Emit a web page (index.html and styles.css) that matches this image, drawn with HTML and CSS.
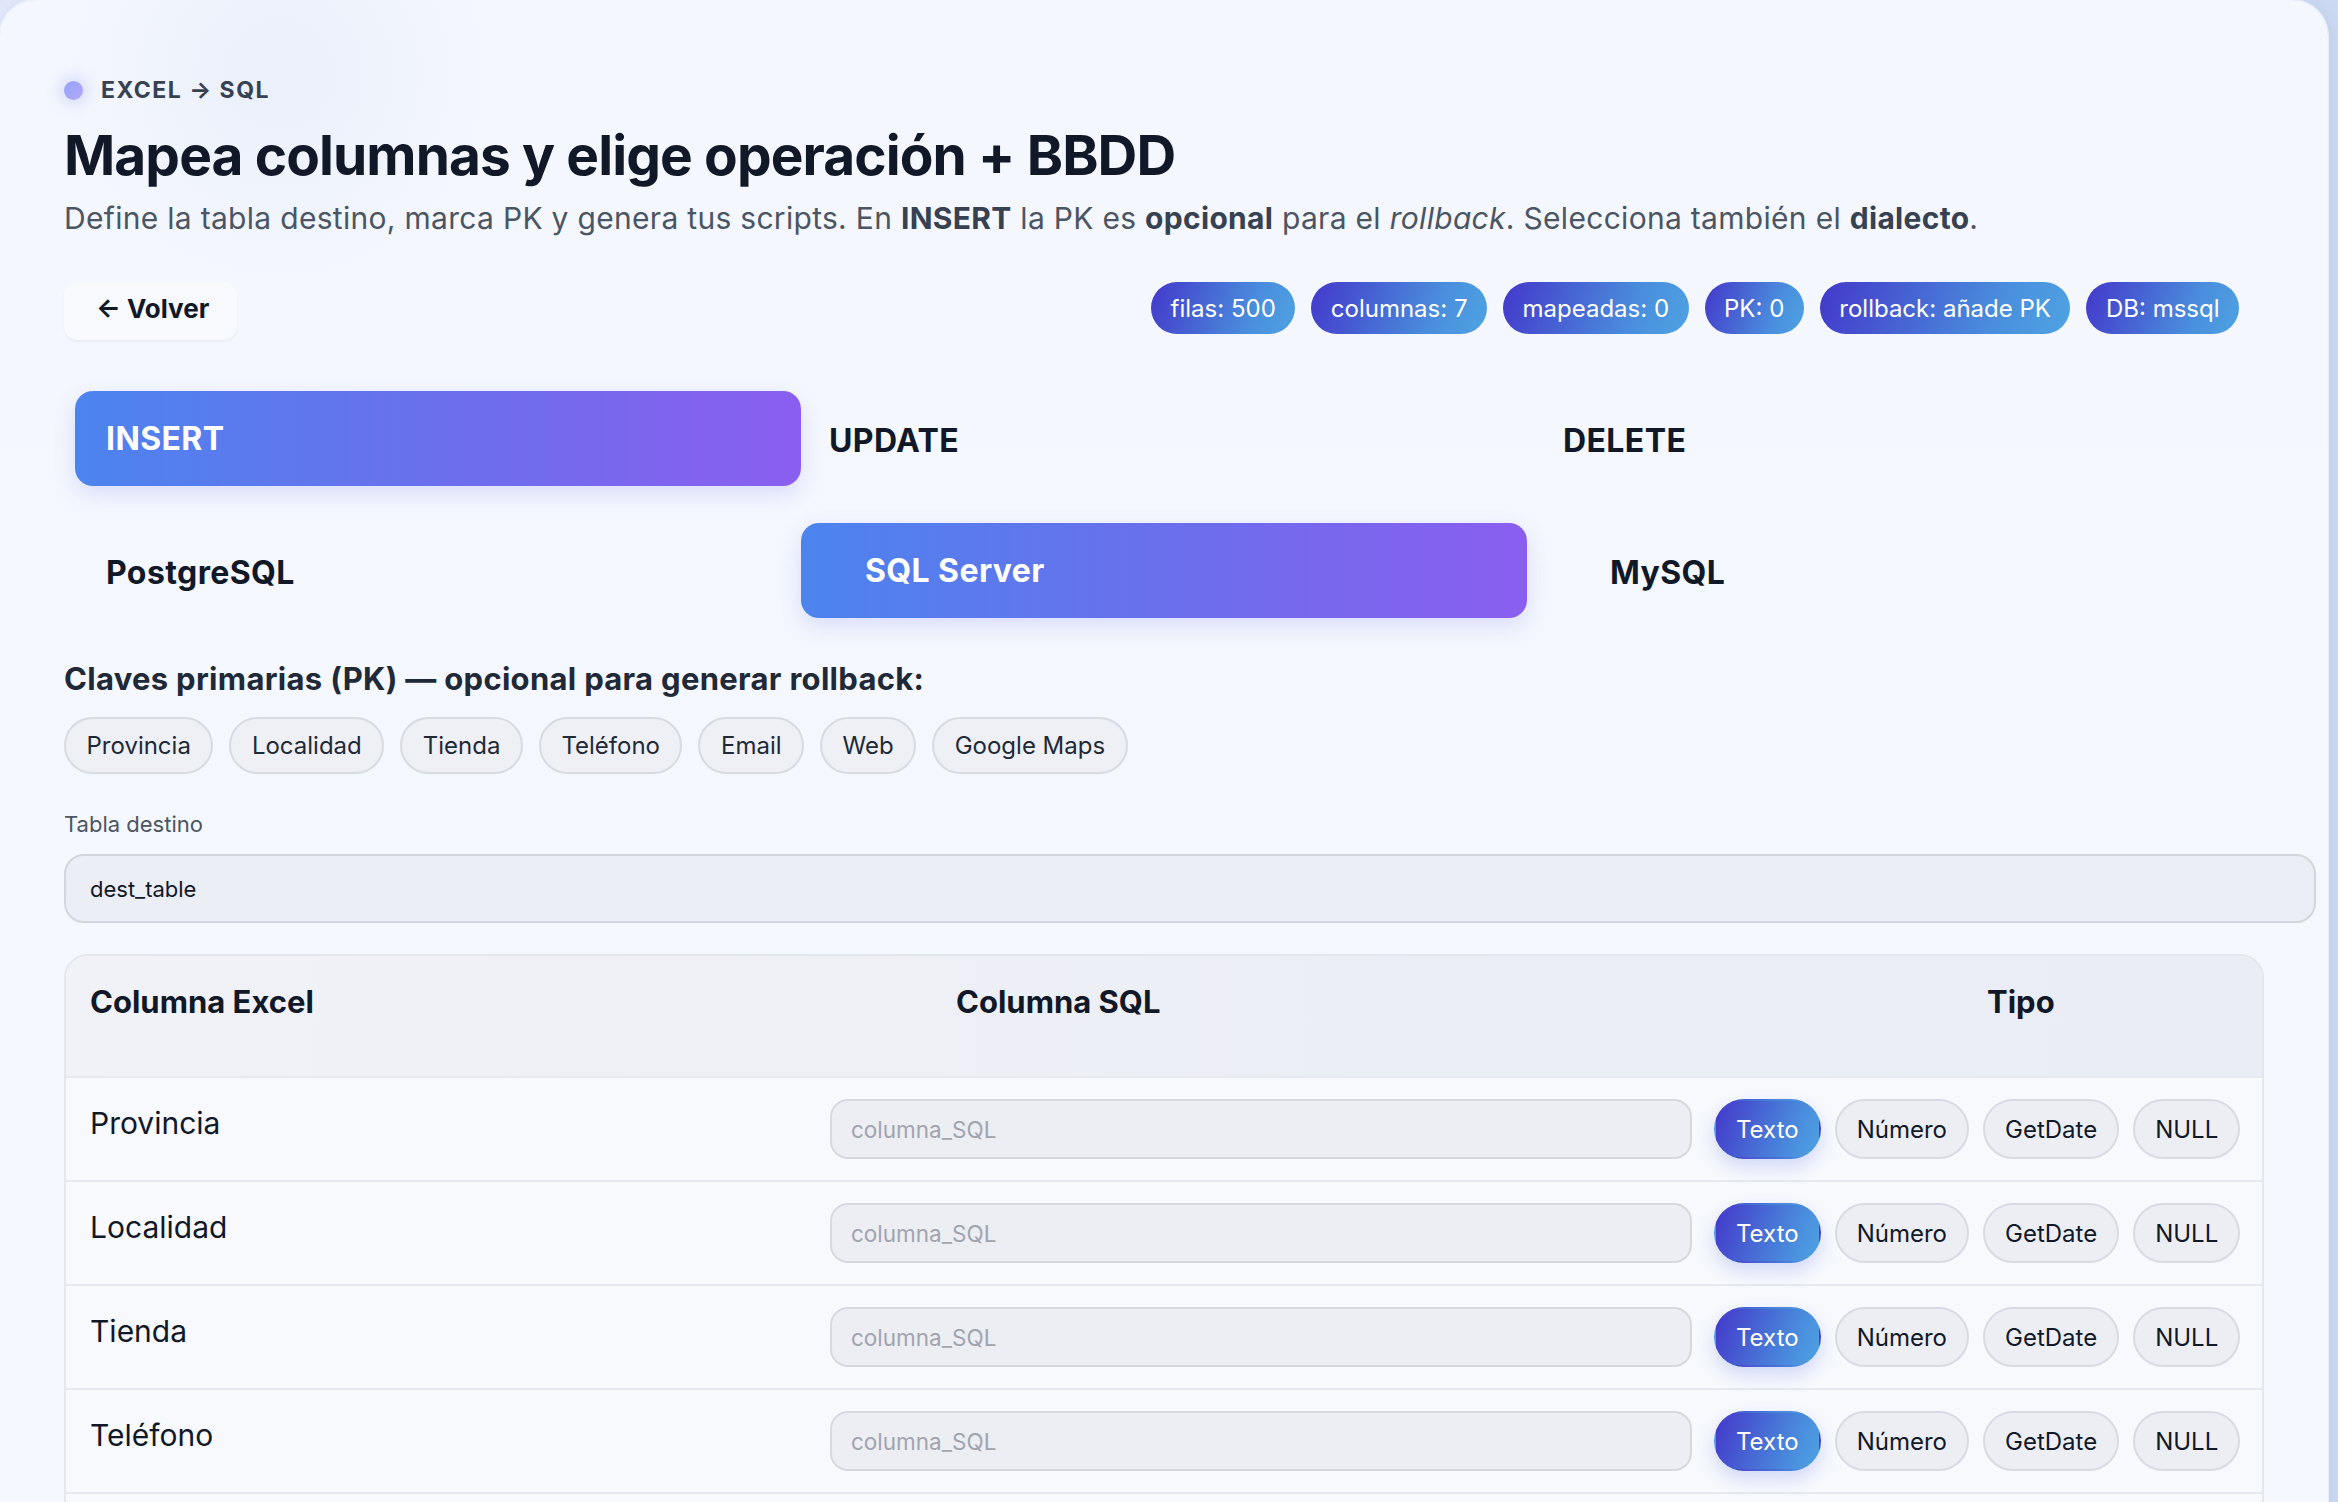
FILE: index.html
```html
<!DOCTYPE html>
<html lang="es">
<head>
<meta charset="utf-8">
<title>Excel → SQL</title>
<link rel="stylesheet" href="styles.css">
</head>
<body>
<main class="card">
  <div class="eyebrow"><span class="dot"></span><span>EXCEL → SQL</span></div>
  <h1 class="title">Mapea columnas y elige operación + BBDD</h1>
  <p class="subtitle">Define la tabla destino, marca PK y genera tus scripts. En <b>INSERT</b> la PK es <b>opcional</b> para el <i>rollback</i>. Selecciona también el <b>dialecto</b>.</p>

  <div class="actions">
    <button class="back">← Volver</button>
    <div class="badges">
      <span class="badge">filas: 500</span>
      <span class="badge">columnas: 7</span>
      <span class="badge">mapeadas: 0</span>
      <span class="badge">PK: 0</span>
      <span class="badge">rollback: añade PK</span>
      <span class="badge">DB: mssql</span>
    </div>
  </div>

  <div class="seg seg-ops">
    <button class="seg-btn active">INSERT</button>
    <button class="seg-btn op-update">UPDATE</button>
    <button class="seg-btn op-delete">DELETE</button>
  </div>
  <div class="seg seg-db">
    <button class="seg-btn db-pg">PostgreSQL</button>
    <button class="seg-btn db-ms active">SQL Server</button>
    <button class="seg-btn db-my">MySQL</button>
  </div>

  <h2 class="pk-title">Claves primarias (PK) — opcional para generar rollback:</h2>
  <div class="chips">
    <span class="chip">Provincia</span>
    <span class="chip">Localidad</span>
    <span class="chip">Tienda</span>
    <span class="chip">Teléfono</span>
    <span class="chip">Email</span>
    <span class="chip">Web</span>
    <span class="chip">Google Maps</span>
  </div>

  <label class="field-label" for="dest">Tabla destino</label>
  <input id="dest" class="field" type="text" value="dest_table">

  <section class="map">
    <div class="map-head">
      <div>Columna Excel</div>
      <div>Columna SQL</div>
      <div>Tipo</div>
    </div>
    <div class="map-row">
      <div class="col-name">Provincia</div>
      <input class="col-input" type="text" placeholder="columna_SQL">
      <div class="types"><span class="type on">Texto</span><span class="type">Número</span><span class="type">GetDate</span><span class="type">NULL</span></div>
    </div>
    <div class="map-row">
      <div class="col-name">Localidad</div>
      <input class="col-input" type="text" placeholder="columna_SQL">
      <div class="types"><span class="type on">Texto</span><span class="type">Número</span><span class="type">GetDate</span><span class="type">NULL</span></div>
    </div>
    <div class="map-row">
      <div class="col-name">Tienda</div>
      <input class="col-input" type="text" placeholder="columna_SQL">
      <div class="types"><span class="type on">Texto</span><span class="type">Número</span><span class="type">GetDate</span><span class="type">NULL</span></div>
    </div>
    <div class="map-row">
      <div class="col-name">Teléfono</div>
      <input class="col-input" type="text" placeholder="columna_SQL">
      <div class="types"><span class="type on">Texto</span><span class="type">Número</span><span class="type">GetDate</span><span class="type">NULL</span></div>
    </div>
    <div class="map-row">
      <div class="col-name">Email</div>
      <input class="col-input" type="text" placeholder="columna_SQL">
      <div class="types"><span class="type on">Texto</span><span class="type">Número</span><span class="type">GetDate</span><span class="type">NULL</span></div>
    </div>
    <div class="map-row">
      <div class="col-name">Web</div>
      <input class="col-input" type="text" placeholder="columna_SQL">
      <div class="types"><span class="type on">Texto</span><span class="type">Número</span><span class="type">GetDate</span><span class="type">NULL</span></div>
    </div>
    <div class="map-row">
      <div class="col-name">Google Maps</div>
      <input class="col-input" type="text" placeholder="columna_SQL">
      <div class="types"><span class="type on">Texto</span><span class="type">Número</span><span class="type">GetDate</span><span class="type">NULL</span></div>
    </div>
  </section>
</main>
</body>
</html>
```
FILE: styles.css
```css
* { box-sizing: border-box; }

html, body {
  margin: 0;
  padding: 0;
}

body {
  background: linear-gradient(90deg, #dfe7f8 0%, #d6e1f6 60%, #cbd9f2 100%);
  font-family: Inter, "Noto Sans", "Liberation Sans", sans-serif;
  color: #111827;
  height: 1502px;
  overflow: hidden;
}

.card {
  width: 2328px;
  min-height: 1502px;
  background:
    radial-gradient(circle at 12% 4%, rgba(230, 236, 250, 0.7) 0, rgba(230, 236, 250, 0) 220px),
    linear-gradient(180deg, #f4f7fd 0%, #f5f8fe 100%);
  border-radius: 36px 36px 0 0;
  padding: 74px 64px 40px;
  box-shadow: 0 0 0 1px rgba(255, 255, 255, 0.6), 4px 0 12px rgba(120, 145, 200, 0.12);
}

/* header */
.eyebrow {
  display: flex;
  align-items: center;
  gap: 18px;
  height: 32px;
  font-size: 23px;
  font-weight: 700;
  letter-spacing: 1.5px;
  color: #374151;
}

.dot {
  width: 19px;
  height: 19px;
  border-radius: 50%;
  background: linear-gradient(135deg, #93a4fb, #b3a8f9);
  box-shadow: 0 0 14px 5px rgba(129, 140, 248, 0.22);
}

.title {
  margin: 16px 0 0;
  font-size: 55px;
  line-height: 66px;
  font-weight: 700;
  letter-spacing: -0.9px;
  color: #111827;
}

.subtitle {
  margin: 10px 0 0;
  font-size: 30px;
  line-height: 40px;
  letter-spacing: 0.3px;
  color: #4b5563;
}

.subtitle b {
  font-weight: 700;
  color: #374151;
}

/* actions */
.actions {
  display: flex;
  justify-content: space-between;
  align-items: flex-start;
  margin-top: 44px;
}

.back {
  height: 58px;
  padding: 0 28px 5px 32px;
  border: 0;
  border-radius: 14px;
  background: rgba(255, 255, 255, 0.3);
  box-shadow: 0 2px 3px rgba(30, 41, 80, 0.05);
  font-family: inherit;
  font-size: 26px;
  font-weight: 700;
  color: #111827;
}

.badges {
  display: flex;
  gap: 16px;
  padding-right: 25px;
}

.badge {
  height: 52px;
  display: flex;
  align-items: center;
  padding: 0 19.5px;
  border-radius: 26px;
  background: linear-gradient(110deg, #4338ca 0%, #4a8edd 70%, #4ea3e2 100%);
  color: #ffffff;
  font-size: 24px;
  white-space: nowrap;
}

/* segmented */
.seg {
  display: grid;
  grid-template-columns: repeat(3, 1fr);
  padding: 0 11px;
}

.seg-ops { margin-top: 53px; }
.seg-db { margin-top: 37px; }

.seg-btn {
  height: 95px;
  border: 0;
  border-radius: 18px;
  background: transparent;
  text-align: left;
  padding: 0 0 0 31px;
  font-family: inherit;
  font-size: 32px;
  font-weight: 700;
  letter-spacing: 0.4px;
  color: #111827;
}

.seg-btn.active {
  background: linear-gradient(90deg, #4c84ee 0%, #6a6fec 50%, #8a5ef0 100%);
  color: #ffffff;
  transform: translateY(-2px);
  box-shadow: 0 8px 22px rgba(79, 90, 229, 0.16);
}

.op-update { padding-left: 28px; }
.op-delete { padding-left: 36px; }
.db-ms { padding-left: 64px; }
.db-my { padding-left: 83px; }

/* pk */
.pk-title {
  margin: 39px 0 0;
  font-size: 31px;
  line-height: 40px;
  font-weight: 700;
  letter-spacing: 0.3px;
  color: #1f2937;
}

.chips {
  display: flex;
  gap: 16px;
  margin-top: 18px;
}

.chip {
  height: 57px;
  display: flex;
  align-items: center;
  padding: 0 20.5px;
  border: 2px solid #d8dbe3;
  border-radius: 29px;
  background: #eef0f5;
  font-size: 24px;
  color: #1f2937;
}

.field-label {
  display: block;
  margin-top: 35px;
  font-size: 22px;
  line-height: 30px;
  color: #4b5563;
}

.field {
  display: block;
  box-sizing: content-box;
  width: 100%;
  height: 65px;
  margin-top: 15px;
  padding: 0 24px;
  border: 2px solid #d3d6de;
  border-radius: 20px;
  background: #eceef5;
  font-family: inherit;
  font-size: 22px;
  color: #111827;
  outline: none;
}

/* mapping table */
.map {
  margin-top: 31px;
  border: 2px solid #e3e6ed;
  border-radius: 24px;
  overflow: hidden;
  background: #f7f9fd;
}

.map-head {
  display: grid;
  grid-template-columns: 866px 1031px 1fr;
  padding: 26px 24px 54px;
  background: linear-gradient(90deg, #f0f2f7 0%, #eceef5 60%, #eaedf5 100%);
  font-size: 31px;
  line-height: 40px;
  font-weight: 700;
  color: #111827;
}

.map-row {
  display: grid;
  grid-template-columns: 718px 862px 1fr;
  column-gap: 22px;
  align-items: center;
  padding: 21px 26px 21px 24px;
  border-top: 2px solid #e6e9ef;
}

.col-name {
  font-size: 30px;
  line-height: 38px;
  color: #111827;
  padding-bottom: 12px;
}

.col-input {
  height: 60px;
  width: 100%;
  padding: 0 19px;
  border: 2px solid #d6d9e0;
  border-radius: 18px;
  background: #eceef4;
  font-family: inherit;
  font-size: 22.5px;
  color: #111827;
  outline: none;
}

.col-input::placeholder {
  color: #a0a4ae;
}

.types {
  display: flex;
  justify-content: flex-end;
  gap: 14px;
}

.type {
  height: 60px;
  display: flex;
  align-items: center;
  padding: 0 20px;
  border: 2px solid #d8dbe3;
  border-radius: 30px;
  background: #eceef4;
  font-size: 24px;
  color: #111827;
}

.type.on {
  border-color: transparent;
  background: linear-gradient(110deg, #4338ca 0%, #4a8edd 75%, #4ea3e2 100%);
  color: #ffffff;
  box-shadow: 0 8px 18px rgba(79, 100, 229, 0.22);
}
```
